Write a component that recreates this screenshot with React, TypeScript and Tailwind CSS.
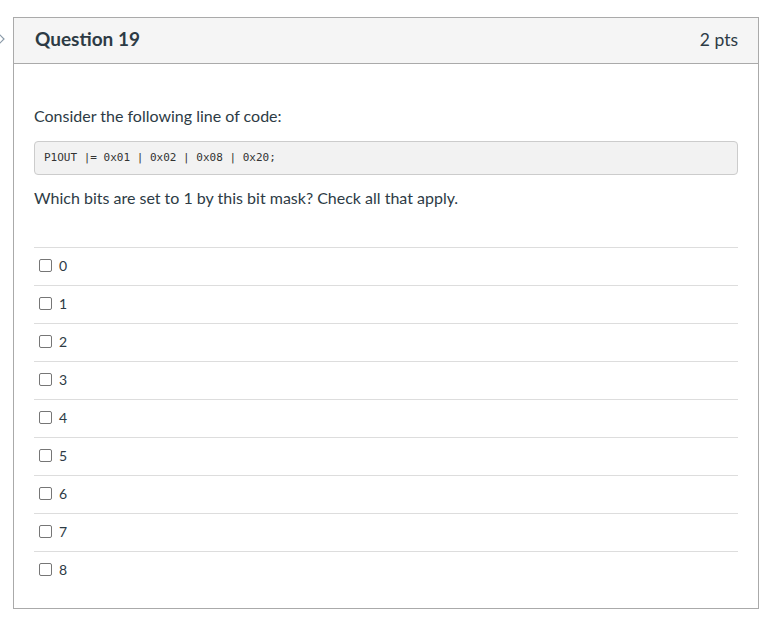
import React from "react";

const answers = ["0", "1", "2", "3", "4", "5", "6", "7", "8"];

export default function App() {
  return (
    <div className="relative w-[783px] h-[624px] bg-white text-[#2d3b45]" style={{ fontFamily: "Lato, 'Liberation Sans', sans-serif" }}>
      <svg className="absolute left-0 top-[32px]" width="6" height="14" viewBox="0 0 6 14">
        <path d="M-2 1 L4 7 L-2 13" fill="none" stroke="#8a9aa8" strokeWidth="1.2" />
      </svg>
      <div className="pt-[17px] pl-[13px]">
        <div className="w-[746px] h-[592px] border border-[#aaaaaa] flex flex-col">
          <div className="h-[46px] bg-[#f5f5f5] border-b border-[#aaaaaa] flex items-center justify-between pl-[21px] pr-[20px]">
            <div className="text-[19px] font-bold -mt-[3px]">Question 19</div>
            <div className="text-[17.5px] -mt-[1px]">2 pts</div>
          </div>
          <div className="px-[20px] pt-[40px]">
            <div className="text-[16px] leading-[24px]">Consider the following line of code:</div>
            <div className="mt-[13px] h-[34px] rounded-[4px] border border-[#cccccc] bg-[#f2f2f2] flex items-center pl-[9px] text-[11px] text-[#333]" style={{ fontFamily: "'DejaVu Sans Mono', monospace" }}>
              P1OUT |= 0x01 | 0x02 | 0x08 | 0x20;
            </div>
            <div className="mt-[11px] text-[16px] leading-[24px]">Which bits are set to 1 by this bit mask? Check all that apply.</div>
            <div className="mt-[37px]">
              {answers.map((a) => (
                <div key={a} className="h-[38px] border-t border-[#dddddd] flex items-center pl-[5px] pb-[2px]">
                  <span className="w-[13px] h-[13px] border border-[#767676] rounded-[2px] mr-[7px] inline-block" />
                  <span className="text-[14px]">{a}</span>
                </div>
              ))}
            </div>
          </div>
        </div>
      </div>
    </div>
  );
}
